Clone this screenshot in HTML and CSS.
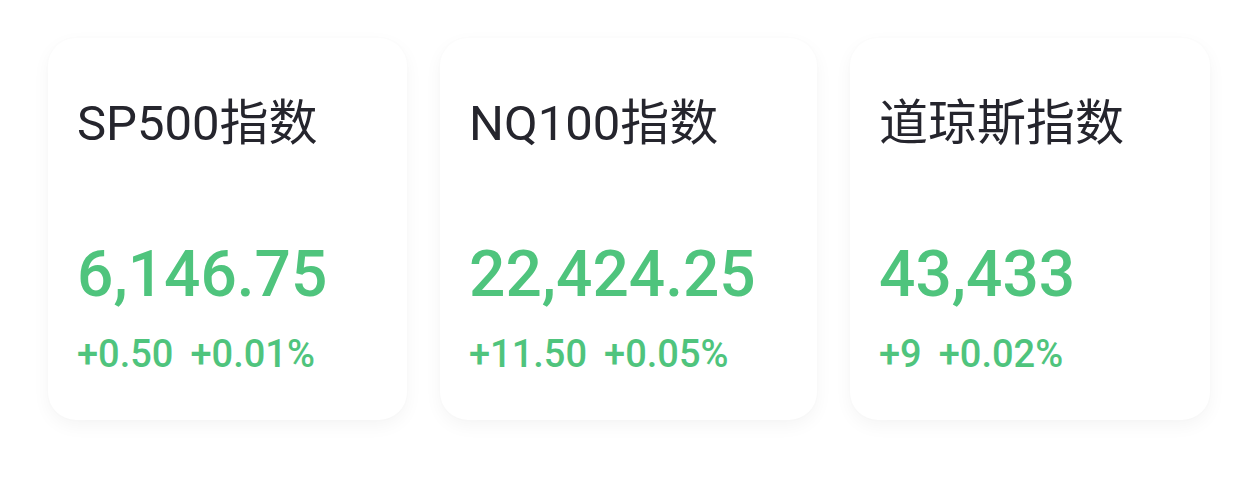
FILE: index.html
```html
<!DOCTYPE html>
<html lang="zh-CN">
<head>
<meta charset="utf-8">
<title>指数</title>
<link rel="stylesheet" href="styles.css">
</head>
<body>
<div class="cards">
  <div class="card">
    <div class="card-title">SP500指数</div>
    <div class="card-price">6,146.75</div>
    <div class="card-change"><span>+0.50</span><span>+0.01%</span></div>
  </div>
  <div class="card">
    <div class="card-title">NQ100指数</div>
    <div class="card-price">22,424.25</div>
    <div class="card-change"><span>+11.50</span><span>+0.05%</span></div>
  </div>
  <div class="card">
    <div class="card-title">道琼斯指数</div>
    <div class="card-price">43,433</div>
    <div class="card-change"><span>+9</span><span>+0.02%</span></div>
  </div>
</div>
</body>
</html>
```
FILE: styles.css
```css
html, body {
  margin: 0;
  padding: 0;
  background: #ffffff;
}
body {
  width: 1242px;
  height: 498px;
  overflow: hidden;
  font-family: Roboto, "Noto Sans CJK SC", sans-serif;
}
.cards {
  display: grid;
  grid-template-columns: 359px 377px 360px;
  column-gap: 33px;
  padding: 38px 0 0 48px;
}
.card {
  background: #ffffff;
  border-radius: 28px;
  box-shadow: 0 6px 18px rgba(0, 0, 0, 0.045), 0 0 4px rgba(0, 0, 0, 0.015);
  padding: 57px 0 43px 29px;
  height: 382px;
  box-sizing: border-box;
}
.card-title {
  font-size: 49px;
  line-height: 58px;
  color: #25252d;
  font-weight: 400;
}
.card-price {
  margin-top: 84px;
  font-size: 64px;
  line-height: 76px;
  font-weight: 500;
  color: #4fc47d;
}
.card-change {
  margin-top: 19px;
  font-size: 38px;
  line-height: 45px;
  font-weight: 500;
  color: #4fc47d;
  display: flex;
  gap: 17px;
}
```
